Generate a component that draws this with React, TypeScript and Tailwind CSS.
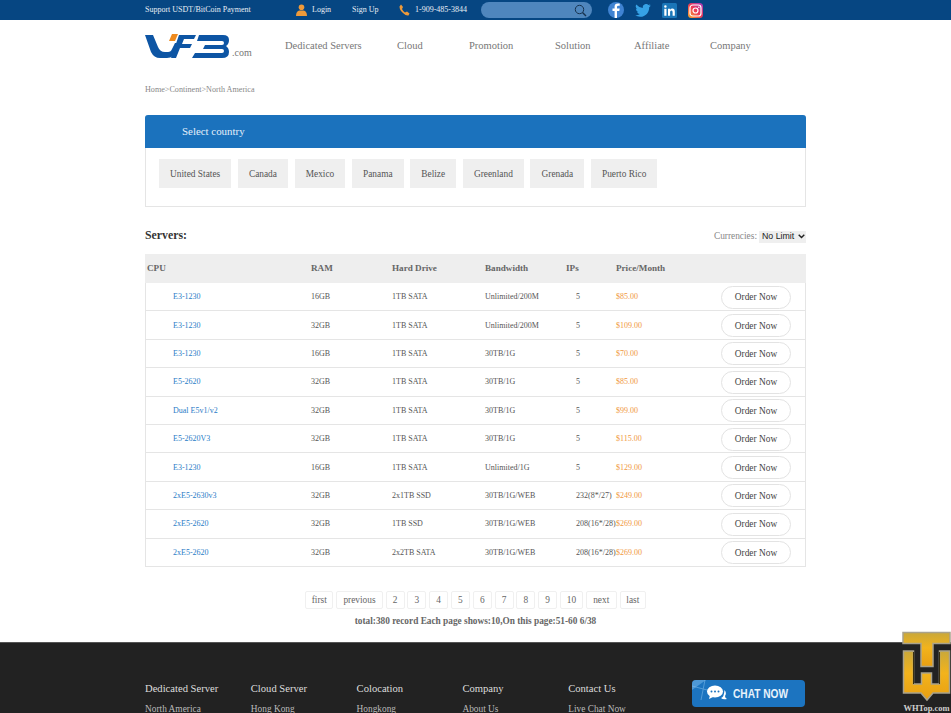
import React from 'react';

const navItems = [
  { label: 'Dedicated Servers', cls: 'w-[112px]' },
  { label: 'Cloud', cls: 'w-[72px]' },
  { label: 'Promotion', cls: 'w-[86px]' },
  { label: 'Solution', cls: 'w-[79px]' },
  { label: 'Affiliate', cls: 'w-[76px]' },
  { label: 'Company', cls: 'w-auto' },
];

const countries = ['United States', 'Canada', 'Mexico', 'Panama', 'Belize', 'Greenland', 'Grenada', 'Puerto Rico'];

const servers = [
  ['E3-1230', '16GB', '1TB SATA', 'Unlimited/200M', '5', '$85.00'],
  ['E3-1230', '32GB', '1TB SATA', 'Unlimited/200M', '5', '$109.00'],
  ['E3-1230', '16GB', '1TB SATA', '30TB/1G', '5', '$70.00'],
  ['E5-2620', '32GB', '1TB SATA', '30TB/1G', '5', '$85.00'],
  ['Dual E5v1/v2', '32GB', '1TB SATA', '30TB/1G', '5', '$99.00'],
  ['E5-2620V3', '32GB', '1TB SATA', '30TB/1G', '5', '$115.00'],
  ['E3-1230', '16GB', '1TB SATA', 'Unlimited/1G', '5', '$129.00'],
  ['2xE5-2630v3', '32GB', '2x1TB SSD', '30TB/1G/WEB', '232(8*/27)', '$249.00'],
  ['2xE5-2620', '32GB', '1TB SSD', '30TB/1G/WEB', '208(16*/28)', '$269.00'],
  ['2xE5-2620', '32GB', '2x2TB SATA', '30TB/1G/WEB', '208(16*/28)', '$269.00'],
];

const pages = [
  { label: 'first', cls: 'w-[28.500px]' },
  { label: 'previous', cls: 'w-[46.500px]' },
  { label: '2', cls: 'w-[19px]' },
  { label: '3', cls: 'w-[19px]' },
  { label: '4', cls: 'w-[19px]' },
  { label: '5', cls: 'w-[19px]' },
  { label: '6', cls: 'w-[19px]' },
  { label: '7', cls: 'w-[19px]' },
  { label: '8', cls: 'w-[19px]' },
  { label: '9', cls: 'w-[19px]' },
  { label: '10', cls: 'w-[23px]' },
  { label: 'next', cls: 'w-[31px]' },
  { label: 'last', cls: 'w-[26.500px]' },
];

const footerCols = [
  ['Dedicated Server', 'North America'],
  ['Cloud Server', 'Hong Kong'],
  ['Colocation', 'Hongkong'],
  ['Company', 'About Us'],
  ['Contact Us', 'Live Chat Now'],
];

const gridCols = 'grid grid-cols-[166px_81px_93px_81px_50px_105px_1fr] items-center';

const Logo = () => (
  <svg width="85" height="25" viewBox="0 0 85 25">
    <path
      d="M0 1h8l5 12q2 5 7 5h3q3 0 4-3l3-6h6l-4 8q-3 7-10 7h-7q-6 0-9-6z"
      fill="#0d55a4"
    />
    <path d="M24 7l3-7h6l-3 7z" fill="#ee8a1e" />
    <path d="M34 1h17l-2 4H39l-2 5h10l-2 4H35l-4 10h-5z" fill="#0d55a4" />
    <path
      d="M54 1h24q6 0 6 5 0 4-3 6 3 2 3 6 0 6-7 6H47l3-5h27q2 0 2-2t-2-2H58l2-4h17q2 0 2-2t-2-2H52z"
      fill="#0d55a4"
    />
  </svg>
);

const Watermark = () => (
  <div className="absolute right-0 top-[631px] flex h-[82px] w-[49px] flex-col items-center">
    <svg width="49" height="71" viewBox="0 0 49 71">
      <defs>
        <linearGradient id="gold" x1="0" y1="0" x2="0" y2="1">
          <stop offset="0" stopColor="#c9a83a" />
          <stop offset="0.45" stopColor="#f2b31c" />
          <stop offset="1" stopColor="#e89f12" />
        </linearGradient>
      </defs>
      <path d="M1 1.500h47v11H31v23H19v-23H1z" fill="url(#gold)" stroke="#a9a28c" strokeWidth="1.500" />
      <path d="M1.500 20h10v33h8V42h10v11h8V20h10v42H31l-6 7-6-7H1.500z" fill="url(#gold)" stroke="#a9a28c" strokeWidth="1.500" />
      <path d="M11.500 21v32M37.500 21v32" stroke="#3a3010" strokeWidth="1" />
    </svg>
    <span className="mt-[2px] whitespace-nowrap text-[8.500px] font-bold leading-[9px] text-[#cfcfcf]">WHTop.com</span>
  </div>
);

const App = () => {
  return (
    <div className="relative h-[713px] w-[951px] overflow-hidden bg-white font-['Liberation_Serif',serif] text-[#666]">
      {/* top bar */}
      <div className="h-[20px] bg-[#064682] text-[8px] text-[#e8eef5]">
        <div className="mx-auto flex h-full w-[661px] items-center">
          <span className="w-[151px]">Support USDT/BitCoin Payment</span>
          <svg width="11" height="12" viewBox="0 0 11 12" className="mr-[5px]">
            <circle cx="5.500" cy="3.200" r="2.800" fill="#ee9a3a" />
            <path d="M0 12q0-5 3.500-5.500h4Q11 7 11 12z" fill="#ee9a3a" />
          </svg>
          <span className="w-[40px]">Login</span>
          <span className="w-[47px]">Sign Up</span>
          <svg width="11" height="12" viewBox="0 0 11 12" className="mr-[5px]">
            <path
              d="M2 .5 4 3 3 5q1 2 3 3.500l2-1 2.500 2-1 2Q7 12 4 9 .5 6 .5 2.500z"
              fill="#ee9a3a"
            />
          </svg>
          <span className="w-[66px]">1-909-485-3844</span>
          <div className="flex h-[16px] w-[111px] items-center justify-end rounded-full bg-[#4f86bd] pr-[5px]">
            <svg width="13" height="13" viewBox="0 0 13 13" fill="none" stroke="#17324f" strokeWidth="1">
              <circle cx="5.500" cy="5.500" r="4.200" />
              <path d="M8.500 8.500 12 12" strokeWidth="1.400" />
            </svg>
          </div>
          <svg width="16" height="16" viewBox="0 0 16 16" className="ml-[16px]">
            <circle cx="8" cy="8" r="8" fill="#3f83d2" />
            <path d="M9 16V9h2.300l.4-2.500H9V5q0-1.200 1.200-1.200h1.500V1.600Q10.800 1.400 9.800 1.400 6.600 1.400 6.600 4.600v1.900H4.500V9h2.100v7z" fill="#fff" />
          </svg>
          <svg width="16" height="13" viewBox="0 0 24 20" className="ml-[11px]">
            <path
              d="M24 2.400a10 10 0 0 1-2.800.8A5 5 0 0 0 23.300.5a10 10 0 0 1-3.100 1.200A4.900 4.900 0 0 0 11.800 6.200 14 14 0 0 1 1.700.9a4.900 4.900 0 0 0 1.500 6.600A5 5 0 0 1 1 6.900v.1a4.900 4.900 0 0 0 3.900 4.800 5 5 0 0 1-2.200.1 4.900 4.900 0 0 0 4.600 3.400A10 10 0 0 1 0 17.400 14 14 0 0 0 7.500 19.600c9.100 0 14-7.500 14-14v-.6A10 10 0 0 0 24 2.400z"
              fill="#36a2e6"
            />
          </svg>
          <svg width="15" height="15" viewBox="0 0 15 15" className="ml-[11px]">
            <rect width="15" height="15" rx="1.500" fill="#1a76b8" />
            <path d="M2.300 5.800h2.200v6.900H2.300zM3.400 2.300a1.250 1.250 0 1 1 0 2.500 1.250 1.250 0 0 1 0-2.500zM6 5.800h2.100v1q.7-1.200 2.300-1.200 2.400 0 2.400 2.900v4.200h-2.200V9q0-1.500-1.200-1.500-1.300 0-1.300 1.600v3.600H6z" fill="#fff" />
          </svg>
          <svg width="15" height="15" viewBox="0 0 15 15" fill="none" className="ml-[11px]">
            <defs>
              <linearGradient id="insta" x1="0" y1="1" x2="1" y2="0">
                <stop offset="0" stopColor="#fdb32c" />
                <stop offset="0.5" stopColor="#ee3a57" />
                <stop offset="1" stopColor="#a03bc4" />
              </linearGradient>
            </defs>
            <rect width="15" height="15" rx="3.500" fill="url(#insta)" />
            <rect x="2" y="2" width="11" height="11" rx="2.800" stroke="#fff" strokeWidth="1.200" />
            <circle cx="7.500" cy="7.500" r="2.500" stroke="#fff" strokeWidth="1.200" />
            <circle cx="10.800" cy="4.200" r=".8" fill="#fff" />
          </svg>
        </div>
      </div>

      <div className="mx-auto w-[661px]">
        {/* logo + nav */}
        <div className="flex h-[52px] items-center">
          <div className="flex w-[140px] items-end pt-[1px]">
            <Logo />
            <span className="ml-[2px] text-[10px] leading-[12px] text-[#777]">.com</span>
          </div>
          <nav className="flex text-[10.500px] text-[#777]">
            {navItems.map(item => (
              <a key={item.label} className={item.cls}>
                {item.label}
              </a>
            ))}
          </nav>
        </div>

        <div className="mt-[12px] h-[11px] text-[8.150px] leading-[11px] text-[#888]">Home&gt;Continent&gt;North America</div>

        {/* country panel */}
        <section className="mt-[20px] h-[92px] rounded-t-[3px] border-x border-b border-[#e5e5e5]">
          <h2 className="-mx-px flex h-[33px] items-center rounded-t-[3px] bg-[#1b72bd] pl-[37px] text-[10.900px] font-normal text-[#e6f0fa]">
            Select country
          </h2>
          <div className="flex gap-[6.550px] pl-[13px] pt-[11px]">
            {countries.map(name => (
              <a key={name} className="flex h-[29px] items-center bg-[#efefef] px-[11.100px] pt-[1px] text-[9.360px] text-[#555]">
                {name}
              </a>
            ))}
          </div>
        </section>

        {/* servers */}
        <div className="mt-[20px] flex h-[17px] items-center justify-between">
          <h3 className="text-[11.800px] font-bold text-[#333]">Servers:</h3>
          <div className="mt-[2px] flex items-center text-[9.360px] text-[#888]">
            <span className="mr-[2px]">Currencies:</span>
            <div className="flex h-[12px] w-[47px] items-center bg-[#efefef] pl-[3px]">
              <select className="w-[35px] appearance-none font-['Liberation_Sans',sans-serif] text-[8.800px] text-[#222]">
                <option>No Limit</option>
              </select>
              <svg width="7" height="5" viewBox="0 0 7 5" fill="none" stroke="#222" strokeWidth="1.400" className="ml-[1px]">
                <path d="M.7.800 3.500 3.600 6.300.8" />
              </svg>
            </div>
          </div>
        </div>

        <div className="mt-[10px]">
          <div className={`${gridCols} h-[29px] bg-[#eeeeee] text-[9.150px] font-bold text-[#666]`}>
            <span className="pl-[2px]">CPU</span>
            <span>RAM</span>
            <span>Hard Drive</span>
            <span>Bandwidth</span>
            <span>IPs</span>
            <span>Price/Month</span>
            <span />
          </div>
          <div className="border-x border-[#e5e5e5] text-[8px]">
            {servers.map((row, i) => (
              <div key={i} className={`${gridCols} -mx-px h-[28.400px] border-b border-[#e5e5e5] pt-[1px] text-[#555]`}>
                <a className="pl-[28px] text-[#2a7cc7]">{row[0]}</a>
                <span>{row[1]}</span>
                <span>{row[2]}</span>
                <span>{row[3]}</span>
                <span className="whitespace-nowrap pl-[10px]">{row[4]}</span>
                <span className="text-[#f0983e]">{row[5]}</span>
                <span>
                  <a className="flex h-[23px] w-[70px] items-center justify-center rounded-full border border-[#e3e3e3] text-[9.360px] text-[#444]">
                    Order Now
                  </a>
                </span>
              </div>
            ))}
          </div>
        </div>

        {/* pagination */}
        <div className="mt-[24px] flex justify-center gap-[2.800px] text-[9.360px] text-[#666]">
          {pages.map(p => (
            <a key={p.label} className={`flex h-[18px] items-center justify-center rounded-[2px] border border-[#f0f0f0] ${p.cls}`}>
              {p.label}
            </a>
          ))}
        </div>
        <p className="mt-[6px] text-center text-[9.300px] font-bold leading-[12px] text-[#666]">
          total:380 record Each page shows:10,On this page:51-60 6/38
        </p>
      </div>

      {/* footer */}
      <footer className="mt-[15px] h-[71px] border-t border-[#555] bg-[#222222]">
        <div className="mx-auto flex w-[661px] pt-[39px]">
          {footerCols.map(col => (
            <div key={col[0]} className="w-[105.800px]">
              <h4 className="text-[10.600px] font-normal leading-[13px] text-[#ddd]">{col[0]}</h4>
              <a className="mt-[8px] block whitespace-nowrap text-[9.360px] leading-[12px] text-[#bbb]">{col[1]}</a>
            </div>
          ))}
          <a className="relative ml-[18px] mt-[-2px] flex h-[27px] w-[113px] items-center overflow-hidden rounded-[4px] bg-[#1c74c0] pl-[14px] font-['Liberation_Sans',sans-serif]">
            <svg width="113" height="27" viewBox="0 0 113 27" className="absolute left-0 top-0">
              <path d="M0 10 14 0H0z" fill="#6fb0e4" opacity="0.6" />
              <path d="M0 6 30 14M13 0 9 20" stroke="#8cc2ec" strokeWidth="1" opacity="0.5" />
            </svg>
            <svg width="22" height="16" viewBox="0 0 22 16" fill="#fff" className="relative">
              <ellipse cx="9" cy="6.500" rx="8" ry="6" />
              <path d="M4 10l-1 4 5-2.500z" />
              <path d="M18.500 5q2.500 3 .5 6 0 2 2 3-4 1-6-1 3-.5 3.500-8z" />
              <circle cx="5.500" cy="6.500" r="1" fill="#1c74c0" />
              <circle cx="9" cy="6.500" r="1" fill="#1c74c0" />
              <circle cx="12.500" cy="6.500" r="1" fill="#1c74c0" />
            </svg>
            <span className="relative ml-[5px] origin-left scale-x-[0.78] whitespace-nowrap text-[13px] font-bold text-[#e8f2fb]">CHAT NOW</span>
          </a>
        </div>
      </footer>

      <Watermark />
    </div>
  );
};

export default App;
